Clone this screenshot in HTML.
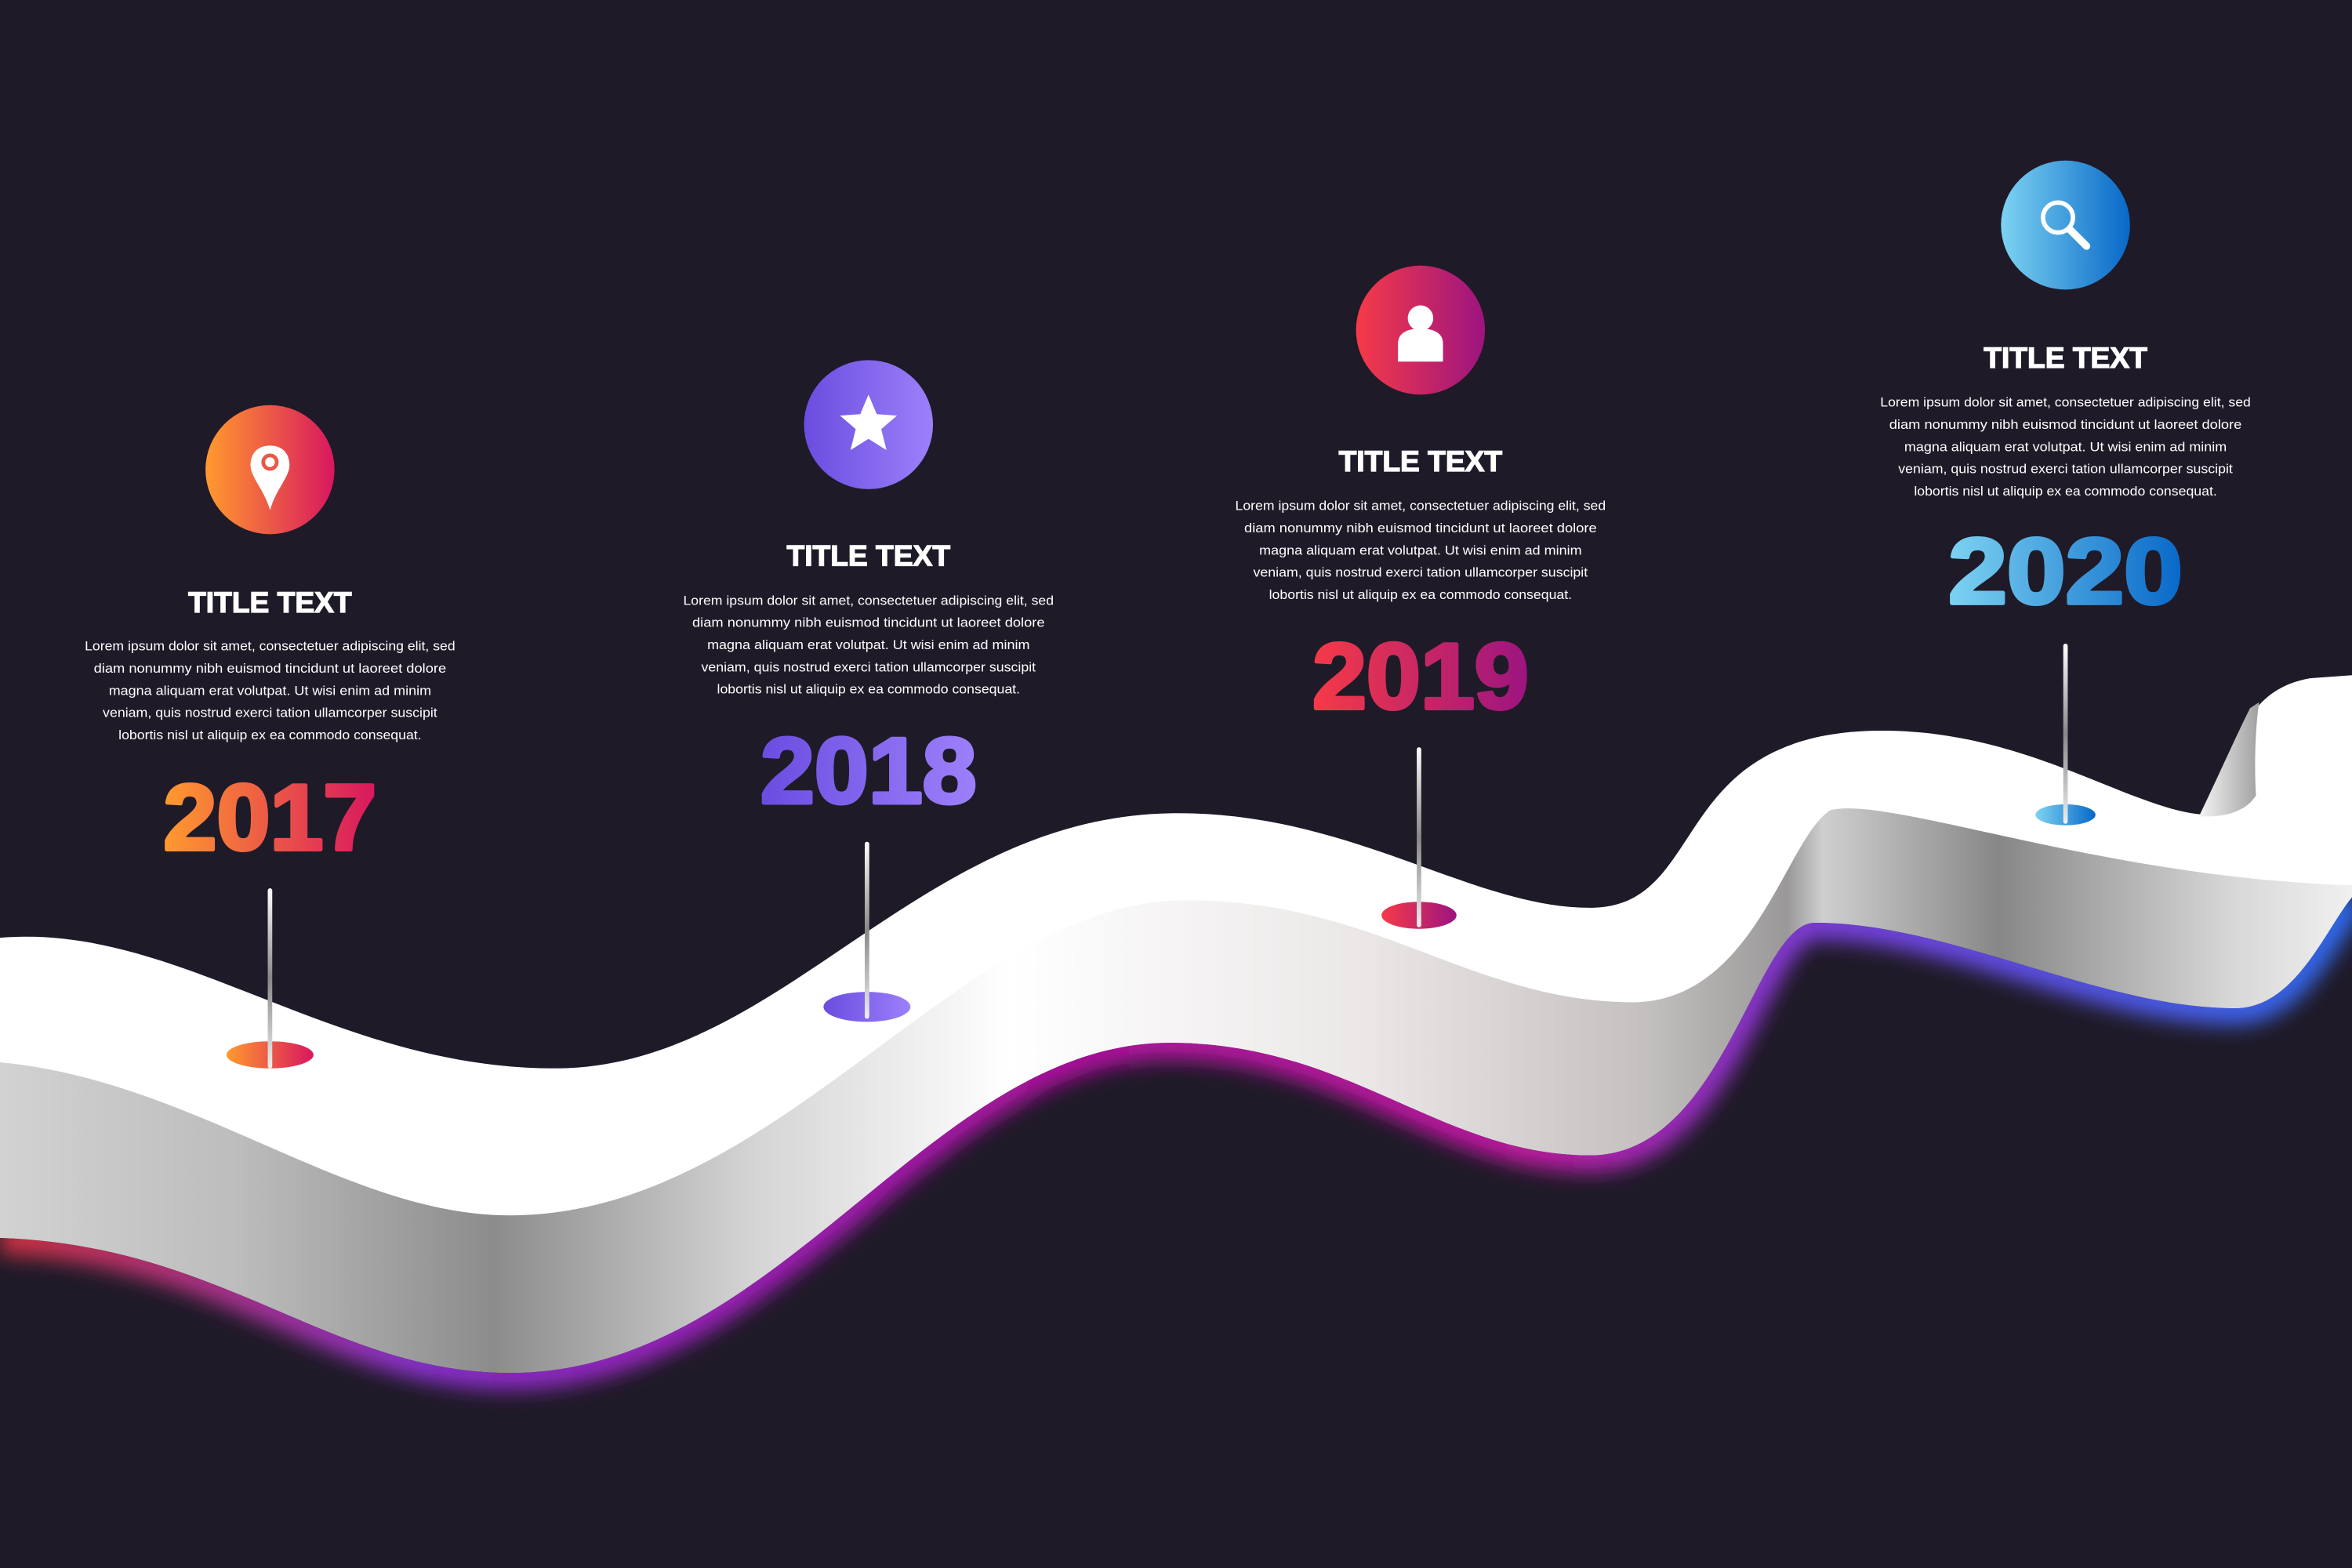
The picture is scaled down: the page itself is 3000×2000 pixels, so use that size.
<!DOCTYPE html>
<html><head><meta charset="utf-8"><style>
html,body{margin:0;padding:0;background:#1f1a28;}
svg{display:block;}
text{font-family:"Liberation Sans",sans-serif;}
</style></head><body>
<svg width="3000" height="2000" viewBox="0 0 1568 1045" preserveAspectRatio="none" xmlns="http://www.w3.org/2000/svg">
<defs>
<linearGradient id="wall" x1="0" x2="1568" y1="0" y2="0" gradientUnits="userSpaceOnUse">
<stop offset="0" stop-color="#d2d2d2"/><stop offset="0.1" stop-color="#bdbdbd"/><stop offset="0.21" stop-color="#8c8c8c"/>
<stop offset="0.32" stop-color="#d4d4d4"/><stop offset="0.43" stop-color="#ffffff"/><stop offset="0.58" stop-color="#ebe7e7"/>
<stop offset="0.7" stop-color="#c4c0c0"/><stop offset="0.76" stop-color="#9a9898"/><stop offset="0.775" stop-color="#cfcfcf"/>
<stop offset="0.85" stop-color="#878787"/><stop offset="0.95" stop-color="#d8d8d8"/><stop offset="1" stop-color="#f0f0f0"/>
</linearGradient>
<linearGradient id="glow" x1="0" x2="1568" y1="0" y2="0" gradientUnits="userSpaceOnUse">
<stop offset="0" stop-color="#d03040"/><stop offset="0.18" stop-color="#8a30d0"/><stop offset="0.45" stop-color="#b010a0"/>
<stop offset="0.65" stop-color="#c01aa0"/><stop offset="0.78" stop-color="#7a40e0"/><stop offset="1" stop-color="#2f6cf0"/>
</linearGradient>
<linearGradient id="strip" x1="0" x2="1" y1="0" y2="0"><stop offset="0" stop-color="#f4f4f4"/><stop offset="1" stop-color="#a0a0a0"/></linearGradient>
<linearGradient id="pole" x1="0" x2="0" y1="0" y2="1"><stop offset="0" stop-color="#ffffff"/><stop offset="0.5" stop-color="#888"/><stop offset="1" stop-color="#eee"/></linearGradient>
<linearGradient id="g17" x1="0" x2="1" y1="0" y2="0"><stop offset="0" stop-color="#ff9a2e"/><stop offset="1" stop-color="#d8175f"/></linearGradient>
<linearGradient id="g18" x1="0" x2="1" y1="0" y2="0"><stop offset="0" stop-color="#6a4de0"/><stop offset="1" stop-color="#9c80fa"/></linearGradient>
<linearGradient id="g19" x1="0" x2="1" y1="0" y2="0"><stop offset="0" stop-color="#f63a48"/><stop offset="1" stop-color="#9c1480"/></linearGradient>
<linearGradient id="g20" x1="0" x2="1" y1="0" y2="0"><stop offset="0" stop-color="#7dd3f2"/><stop offset="1" stop-color="#0868c8"/></linearGradient>
<filter id="blur" x="-10%" y="-50%" width="120%" height="200%"><feGaussianBlur stdDeviation="7"/></filter>
<clipPath id="below"><path d="M0,825 C150,830 220,915 340,915 C520,915 620,695 780,695 C900,695 960,770 1060,770 C1150,770 1170,615 1210,615 C1300,615 1400,672 1490,672 C1530,672 1550,620 1568,598 L1568,1045 L0,1045 Z"/></clipPath>
</defs>
<rect width="1568" height="1045" fill="#1f1a28"/>
<path d="M0,625 C120,615 220,712 370,712 C520,712 610,545 780,542 C900,540 980,605 1060,605 C1140,605 1110,490 1250,487 C1350,485 1420,540 1470,543 C1490,500 1495,460 1540,452 L1568,450 L1568,1045 L0,1045 Z" fill="#ffffff"/>
<path d="M1466,544 C1480,515 1490,492 1500,472 L1506,468 C1503,490 1503,515 1504,530 C1498,540 1485,545 1466,544 Z" fill="url(#strip)"/>
<path d="M0,708 C130,720 230,810 340,810 C520,810 640,600 790,600 C920,600 980,668 1090,668 C1170,666 1190,560 1220,540 C1260,530 1400,585 1568,590 L1568,1045 L0,1045 Z" fill="url(#wall)"/>
<path d="M0,825 C150,830 220,915 340,915 C520,915 620,695 780,695 C900,695 960,770 1060,770 C1150,770 1170,615 1210,615 C1300,615 1400,672 1490,672 C1530,672 1550,620 1568,598 L1568,1045 L0,1045 Z" fill="#1f1a28"/>
<g clip-path="url(#below)">
<path d="M0,825 C150,830 220,915 340,915 C520,915 620,695 780,695 C900,695 960,770 1060,770 C1150,770 1170,615 1210,615 C1300,615 1400,672 1490,672 C1530,672 1550,620 1568,598" fill="none" stroke="url(#glow)" stroke-width="22" filter="url(#blur)"/>
</g>
<ellipse cx="180" cy="703" rx="29" ry="9" fill="url(#g17)"/>
<rect x="178.5" y="592" width="3" height="120" rx="1.5" fill="url(#pole)"/>
<ellipse cx="578" cy="671" rx="29" ry="10" fill="url(#g18)"/>
<rect x="576.5" y="561" width="3" height="118" rx="1.5" fill="url(#pole)"/>
<ellipse cx="946" cy="610" rx="25" ry="9" fill="url(#g19)"/>
<rect x="944.5" y="498" width="3" height="120" rx="1.5" fill="url(#pole)"/>
<ellipse cx="1377" cy="543" rx="20" ry="7" fill="url(#g20)"/>
<rect x="1375.5" y="429" width="3" height="120" rx="1.5" fill="url(#pole)"/>
<circle cx="180" cy="313" r="43" fill="url(#g17)"/>
<path d="M180,297 C171,297 167,303 167,310 C167,318 176,326 180,340 C184,326 193,318 193,310 C193,303 189,297 180,297 Z" fill="#fff"/>
<circle cx="180" cy="308" r="4.5" fill="none" stroke="#e9574a" stroke-width="2.5"/>
<circle cx="579" cy="283" r="43" fill="url(#g18)"/>
<path d="M579,263 L584.5,276 L598,277 L587.5,286 L591,300 L579,292.5 L567,300 L570.5,286 L560,277 L573.5,276 Z" fill="#fff"/>
<circle cx="947" cy="220" r="43" fill="url(#g19)"/>
<circle cx="947" cy="212" r="8.5" fill="#fff"/>
<path d="M932,241 L932,229 C932,222 938,219 947,219 C956,219 962,222 962,229 L962,241 Z" fill="#fff"/>
<circle cx="1377" cy="150" r="43" fill="url(#g20)"/>
<circle cx="1372" cy="145" r="10" fill="none" stroke="#fff" stroke-width="3"/>
<line x1="1380" y1="153" x2="1391" y2="164" stroke="#fff" stroke-width="5" stroke-linecap="round"/>
<g fill="#fff" stroke="#fff" stroke-width="0.7" text-anchor="middle">
<text x="180" y="408" font-size="19.5" font-weight="bold" textLength="109" lengthAdjust="spacingAndGlyphs">TITLE TEXT</text>
<text x="579" y="377" font-size="19.5" font-weight="bold" textLength="109" lengthAdjust="spacingAndGlyphs">TITLE TEXT</text>
<text x="947" y="314" font-size="19.5" font-weight="bold" textLength="109" lengthAdjust="spacingAndGlyphs">TITLE TEXT</text>
<text x="1377" y="245" font-size="19.5" font-weight="bold" textLength="109" lengthAdjust="spacingAndGlyphs">TITLE TEXT</text>
</g>
<g fill="#fff" text-anchor="middle" font-size="8.8">
<text x="180" y="433.5" textLength="247" lengthAdjust="spacingAndGlyphs">Lorem ipsum dolor sit amet, consectetuer adipiscing elit, sed</text>
<text x="180" y="448.3" textLength="235" lengthAdjust="spacingAndGlyphs">diam nonummy nibh euismod tincidunt ut laoreet dolore</text>
<text x="180" y="463.1" textLength="215" lengthAdjust="spacingAndGlyphs">magna aliquam erat volutpat. Ut wisi enim ad minim</text>
<text x="180" y="477.9" textLength="223" lengthAdjust="spacingAndGlyphs">veniam, quis nostrud exerci tation ullamcorper suscipit</text>
<text x="180" y="492.7" textLength="202" lengthAdjust="spacingAndGlyphs">lobortis nisl ut aliquip ex ea commodo consequat.</text>
<text x="579" y="403" textLength="247" lengthAdjust="spacingAndGlyphs">Lorem ipsum dolor sit amet, consectetuer adipiscing elit, sed</text>
<text x="579" y="417.8" textLength="235" lengthAdjust="spacingAndGlyphs">diam nonummy nibh euismod tincidunt ut laoreet dolore</text>
<text x="579" y="432.6" textLength="215" lengthAdjust="spacingAndGlyphs">magna aliquam erat volutpat. Ut wisi enim ad minim</text>
<text x="579" y="447.4" textLength="223" lengthAdjust="spacingAndGlyphs">veniam, quis nostrud exerci tation ullamcorper suscipit</text>
<text x="579" y="462.2" textLength="202" lengthAdjust="spacingAndGlyphs">lobortis nisl ut aliquip ex ea commodo consequat.</text>
<text x="947" y="340" textLength="247" lengthAdjust="spacingAndGlyphs">Lorem ipsum dolor sit amet, consectetuer adipiscing elit, sed</text>
<text x="947" y="354.8" textLength="235" lengthAdjust="spacingAndGlyphs">diam nonummy nibh euismod tincidunt ut laoreet dolore</text>
<text x="947" y="369.6" textLength="215" lengthAdjust="spacingAndGlyphs">magna aliquam erat volutpat. Ut wisi enim ad minim</text>
<text x="947" y="384.4" textLength="223" lengthAdjust="spacingAndGlyphs">veniam, quis nostrud exerci tation ullamcorper suscipit</text>
<text x="947" y="399.2" textLength="202" lengthAdjust="spacingAndGlyphs">lobortis nisl ut aliquip ex ea commodo consequat.</text>
<text x="1377" y="271" textLength="247" lengthAdjust="spacingAndGlyphs">Lorem ipsum dolor sit amet, consectetuer adipiscing elit, sed</text>
<text x="1377" y="285.8" textLength="235" lengthAdjust="spacingAndGlyphs">diam nonummy nibh euismod tincidunt ut laoreet dolore</text>
<text x="1377" y="300.6" textLength="215" lengthAdjust="spacingAndGlyphs">magna aliquam erat volutpat. Ut wisi enim ad minim</text>
<text x="1377" y="315.4" textLength="223" lengthAdjust="spacingAndGlyphs">veniam, quis nostrud exerci tation ullamcorper suscipit</text>
<text x="1377" y="330.2" textLength="202" lengthAdjust="spacingAndGlyphs">lobortis nisl ut aliquip ex ea commodo consequat.</text>
</g>
<g text-anchor="middle" font-size="62" font-weight="bold" stroke-width="2.6" stroke-linejoin="round">
<text x="180" y="566" fill="url(#g17)" stroke="url(#g17)" textLength="142" lengthAdjust="spacingAndGlyphs">2017</text>
<text x="579" y="535" fill="url(#g18)" stroke="url(#g18)" textLength="144" lengthAdjust="spacingAndGlyphs">2018</text>
<text x="947" y="472" fill="url(#g19)" stroke="url(#g19)" textLength="144" lengthAdjust="spacingAndGlyphs">2019</text>
<text x="1377" y="402" fill="url(#g20)" stroke="url(#g20)" textLength="156" lengthAdjust="spacingAndGlyphs">2020</text>
</g>
</svg>
</body></html>
